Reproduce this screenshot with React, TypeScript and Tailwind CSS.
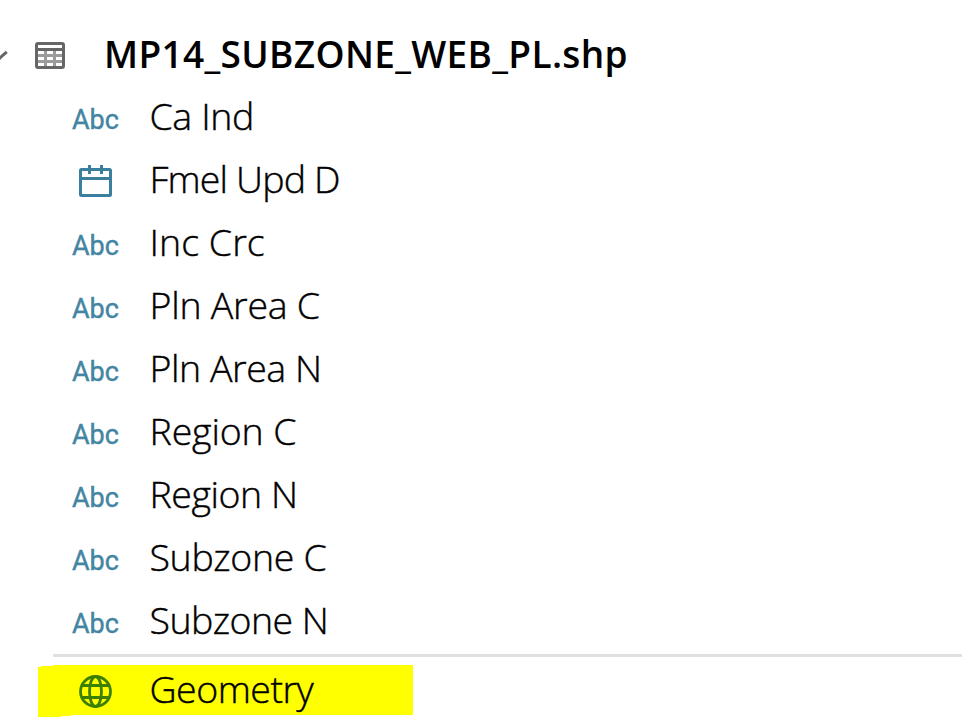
import React from 'react';

type Field = { name: string; kind: 'text' | 'date'; spacing: string };

const fields: Field[] = [
  { name: 'Ca Ind', kind: 'text', spacing: 'tracking-[-0.4px]' },
  { name: 'Fmel Upd D', kind: 'date', spacing: 'tracking-[-0.85px]' },
  { name: 'Inc Crc', kind: 'text', spacing: 'tracking-[0.05px]' },
  { name: 'Pln Area C', kind: 'text', spacing: 'tracking-[-0.25px]' },
  { name: 'Pln Area N', kind: 'text', spacing: 'tracking-[-0.45px]' },
  { name: 'Region C', kind: 'text', spacing: 'tracking-[-0.15px]' },
  { name: 'Region N', kind: 'text', spacing: 'tracking-[-0.45px]' },
  { name: 'Subzone C', kind: 'text', spacing: 'tracking-[-0.35px]' },
  { name: 'Subzone N', kind: 'text', spacing: 'tracking-[-0.55px]' },
];

function CollapseArrow() {
  return (
    <svg width="8" height="14" viewBox="0 0 8 14" fill="none" className="mt-[26px] shrink-0">
      <path d="M-2 12L2.5 7.5L6.8 3.8" stroke="#666" strokeWidth="3" />
    </svg>
  );
}

function TableIcon() {
  return (
    <svg width="30" height="27" viewBox="0 0 30 27" fill="none" className="ml-[27px] mt-[20px] shrink-0">
      <path d="M3 9H27V24H3Z" fill="#fff" />
      <path d="M10.5 9V24M19.5 9V24M3 13.5H27M3 19.5H27" stroke="#9b9b9b" strokeWidth="3" />
      <rect x="1.5" y="1.5" width="27" height="24" rx="1.5" stroke="#666" strokeWidth="3" />
      <path d="M2 7.5H28" stroke="#666" strokeWidth="3" />
    </svg>
  );
}

function CalendarIcon() {
  return (
    <svg width="33" height="32" viewBox="0 0 33 32" fill="none" stroke="#3a7f9e" className="ml-[7px] mt-[18px]">
      <rect x="1.5" y="4.5" width="30" height="26" rx="1" strokeWidth="3" />
      <path d="M1 13.5H32M10.5 0V9M22.5 0V9" strokeWidth="3" />
    </svg>
  );
}

function GlobeIcon() {
  return (
    <svg width="33" height="33" viewBox="0 0 33 33" fill="none" stroke="#3c8000" strokeWidth="2.8" className="ml-[41px] shrink-0">
      <circle cx="16.5" cy="16.5" r="15" />
      <ellipse cx="16.5" cy="16.5" rx="6" ry="15" />
      <path d="M3 10.5H30M3 22.5H30" />
    </svg>
  );
}

export default function App() {
  return (
    <main className="h-[727px] w-[974px] overflow-hidden bg-white font-['Open_Sans',sans-serif] text-black">
      <header className="flex h-[84px] items-start pt-[22px]">
        <CollapseArrow />
        <TableIcon />
        <h1 className="ml-[39px] whitespace-nowrap text-[37px] font-semibold leading-[63px] tracking-[0.34px]">
          MP14_SUBZONE_WEB_PL.shp
        </h1>
      </header>
      <ul>
        {fields.map((field) => (
          <li key={field.name} className="flex h-[63px] items-start pl-[72px]">
            <div className="w-[77.5px] shrink-0">
              {field.kind === 'date' ? (
                <CalendarIcon />
              ) : (
                <span className="block pt-[5px] font-[Roboto,sans-serif] text-[27px] font-normal leading-[63px] text-[#4385a2] [-webkit-text-stroke:0.4px_#4385a2]">Abc</span>
              )}
            </div>
            <span className={`whitespace-nowrap text-[37.5px] font-light leading-[63px] [-webkit-text-stroke:0.4px_black] ${field.spacing}`}>{field.name}</span>
          </li>
        ))}
      </ul>
      <hr className="ml-[53px] mt-[3px] h-[3px] w-[909px] border-0 bg-[#e0e0e0]" />
      <div className="ml-[38px] mt-2 flex h-[53px] w-[375px] items-start bg-[#ffff00] pt-[10px] [clip-path:polygon(0_2px,3px_2px,3px_1px,15px_1px,15px_0,100%_0,100%_50px,33px_50px,33px_51px,24px_51px,24px_52px,0_52px)]">
        <GlobeIcon />
        <span className="-mt-[18px] ml-[37.5px] whitespace-nowrap text-[37.5px] font-light leading-[63px] tracking-[-0.5px] [-webkit-text-stroke:0.4px_black]">Geometry</span>
      </div>
    </main>
  );
}
